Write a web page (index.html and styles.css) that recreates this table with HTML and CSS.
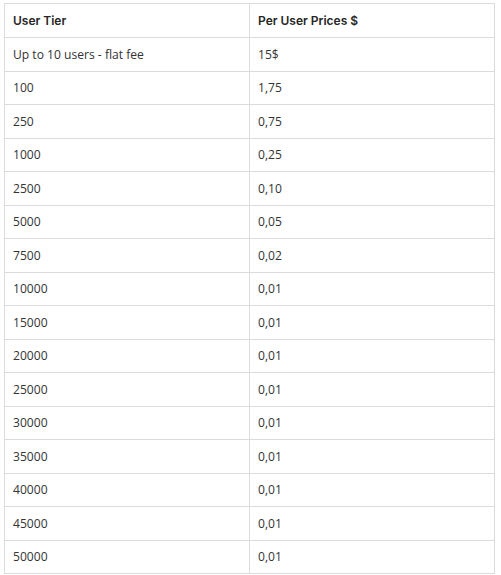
FILE: index.html
```html
<!DOCTYPE html>
<html>
<head>
<meta charset="utf-8">
<link rel="stylesheet" href="styles.css">
</head>
<body>
<table class="prices">
  <thead>
    <tr class="head"><th>User Tier</th><th>Per User Prices $</th></tr>
  </thead>
  <tbody>
    <tr><td>Up to 10 users - flat fee</td><td>15$</td></tr>
    <tr><td>100</td><td>1,75</td></tr>
    <tr><td>250</td><td>0,75</td></tr>
    <tr><td>1000</td><td>0,25</td></tr>
    <tr><td>2500</td><td>0,10</td></tr>
    <tr><td>5000</td><td>0,05</td></tr>
    <tr><td>7500</td><td>0,02</td></tr>
    <tr><td>10000</td><td>0,01</td></tr>
    <tr><td>15000</td><td>0,01</td></tr>
    <tr><td>20000</td><td>0,01</td></tr>
    <tr><td>25000</td><td>0,01</td></tr>
    <tr><td>30000</td><td>0,01</td></tr>
    <tr><td>35000</td><td>0,01</td></tr>
    <tr><td>40000</td><td>0,01</td></tr>
    <tr><td>45000</td><td>0,01</td></tr>
    <tr><td>50000</td><td>0,01</td></tr>
  </tbody>
</table>
</body>
</html>
```
FILE: styles.css
```css
html, body {
  margin: 0;
  padding: 0;
  background: #ffffff;
}
body {
  padding: 3px 0 0 4px;
  font-family: "Open Sans", "Noto Sans", sans-serif;
  font-size: 12.1px;
  color: #333333;
}
.prices {
  border-collapse: collapse;
  width: 491px;
  table-layout: fixed;
}
.prices th,
.prices td {
  border: 1px solid #dcdcdc;
  padding: 0 8px;
  text-align: left;
  vertical-align: middle;
  width: 50%;
}
.prices th {
  font-weight: 600;
  color: #262626;
  height: 33px;
  font-family: "Inter", "Liberation Sans", sans-serif;
  font-size: 12px;
}
.prices td {
  height: 32.5px;
}
```
